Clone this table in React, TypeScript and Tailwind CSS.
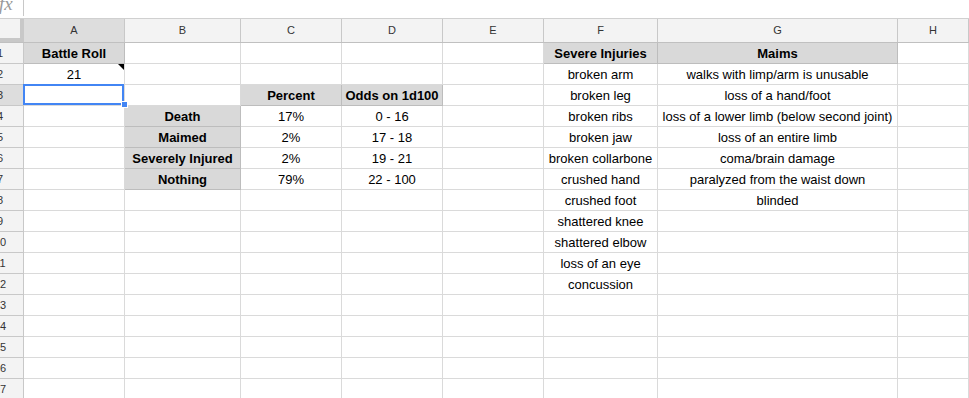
import React from 'react';

// Sheet column layout (widths include the 1px right gridline)
const columns = [
  { key: 'A', width: 'w-[101px]' },
  { key: 'B', width: 'w-[116px]' },
  { key: 'C', width: 'w-[101px]' },
  { key: 'D', width: 'w-[101px]' },
  { key: 'E', width: 'w-[101px]' },
  { key: 'F', width: 'w-[114px]' },
  { key: 'G', width: 'w-[240px]' },
  { key: 'H', width: 'flex-1' },
];

type Cell = { text: string; shaded?: boolean };
type Row = Record<string, Cell>;

const severe = [
  'broken arm',
  'broken leg',
  'broken ribs',
  'broken jaw',
  'broken collarbone',
  'crushed hand',
  'crushed foot',
  'shattered knee',
  'shattered elbow',
  'loss of an eye',
  'concussion',
];

const maims = [
  'walks with limp/arm is unusable',
  'loss of a hand/foot',
  'loss of a lower limb (below second joint)',
  'loss of an entire limb',
  'coma/brain damage',
  'paralyzed from the waist down',
  'blinded',
];

const odds = [
  { label: 'Death', pct: '17%', range: '0 - 16' },
  { label: 'Maimed', pct: '2%', range: '17 - 18' },
  { label: 'Severely Injured', pct: '2%', range: '19 - 21' },
  { label: 'Nothing', pct: '79%', range: '22 - 100' },
];

function buildRows(): Row[] {
  const rows: Row[] = Array.from({ length: 17 }).map(() => ({}));
  rows[0].A = { text: 'Battle Roll', shaded: true };
  rows[1].A = { text: '21' };
  rows[2].C = { text: 'Percent', shaded: true };
  rows[2].D = { text: 'Odds on 1d100', shaded: true };
  odds.forEach((o, i) => {
    rows[3 + i].B = { text: o.label, shaded: true };
    rows[3 + i].C = { text: o.pct };
    rows[3 + i].D = { text: o.range };
  });
  rows[0].F = { text: 'Severe Injuries', shaded: true };
  rows[0].G = { text: 'Maims', shaded: true };
  severe.forEach((s, i) => (rows[1 + i].F = { text: s }));
  maims.forEach((m, i) => (rows[1 + i].G = { text: m }));
  return rows;
}

export default function App() {
  const rows = buildRows();

  return (
    <div className="w-[969px] h-[398px] overflow-hidden bg-white font-['Liberation_Sans',Arial,sans-serif] text-black">
      {/* formula bar */}
      <div className="h-[19px] flex border-b border-[#d0d0d0] overflow-hidden">
        <div className="w-[24px] border-r border-[#c8c8c8] h-[16px] overflow-hidden">
          <span className="block -mt-[6px] -ml-[1px] text-[19px] italic leading-none text-[#9a9a9a] font-['Liberation_Serif',serif]">
            fx
          </span>
        </div>
      </div>

      {/* column headers */}
      <div className="h-[24px] flex border-b border-[#c0c0c0] bg-[#f3f3f3]">
        <div className="w-[24px] h-full bg-[#f3f3f3] border-r-4 border-b-4 border-[#c8c8c8]" />
        {columns.map(c => (
          <div
            key={c.key}
            className={`${c.width} h-full flex items-center justify-center border-r border-[#c8c8c8] text-[11px] text-[#333] ${
              c.key === 'A' ? 'bg-[#dddddd]' : ''
            }`}
          >
            {c.key}
          </div>
        ))}
      </div>

      {rows.map((row, r) => (
        <div key={r} className="h-[21px] flex">
          <div
            className={`w-[24px] h-full overflow-hidden border-r border-b border-[#c8c8c8] ${
              r === 2 ? 'bg-[#dddddd]' : 'bg-[#f3f3f3]'
            }`}
          >
            <span className="block w-[48px] -ml-[24px] text-center text-[11px] leading-[21px] text-[#333]">
              {r + 1}
            </span>
          </div>
          {columns.map(c => {
            const cell = row[c.key];
            const shaded = cell?.shaded;
            const selected = r === 2 && c.key === 'A';
            return (
              <div
                key={c.key}
                className={`${c.width} relative h-full pt-[1px] flex items-center justify-center whitespace-nowrap text-[13px] border-r border-b ${
                  shaded ? 'bg-[#d9d9d9] border-[#bdbdbd] font-bold' : 'border-[#dadada]'
                }`}
              >
                {cell?.text}
                {r === 1 && c.key === 'A' && (
                  <span className="absolute top-0 right-0 w-0 h-0 border-t-[6px] border-l-[6px] border-t-black border-l-transparent" />
                )}
                {selected && (
                  <>
                    <span className="absolute -top-[1px] -left-[1px] right-0 bottom-0 border-2 border-[#4285f4] pointer-events-none" />
                    <span className="absolute -right-[4px] -bottom-[3px] w-[7px] h-[7px] bg-[#4285f4] border border-white z-10" />
                  </>
                )}
              </div>
            );
          })}
        </div>
      ))}
    </div>
  );
}
